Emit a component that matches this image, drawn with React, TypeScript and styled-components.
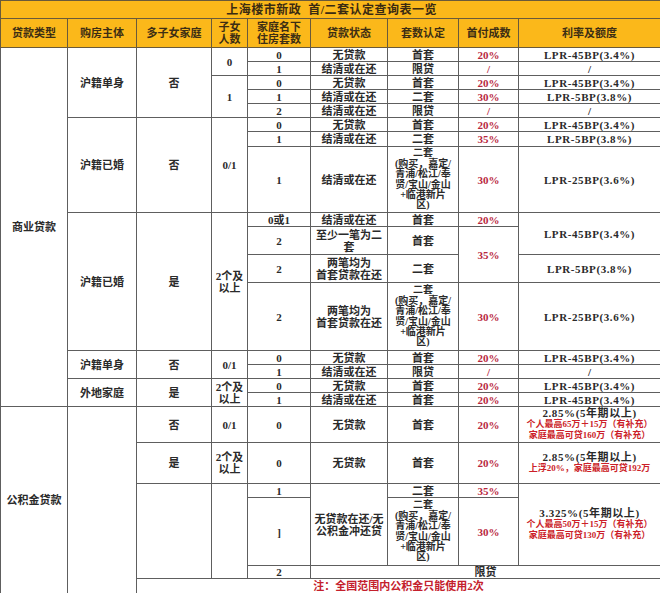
import styled, { createGlobalStyle } from "styled-components";
import React from "react";

const GlobalStyle = createGlobalStyle`
  html, body {
    margin: 0;
    padding: 0;
    background: #ffffff;
  }
  body {
    font-family: "Liberation Serif", "Noto Sans CJK SC", serif;
    color: #222;
  }
`;

const Sheet = styled.table`
  width: 660px;
  table-layout: fixed;
  border-collapse: collapse;
  font-size: 11px;
  line-height: 12px;
  font-weight: 700;
`;

const Row = styled.tr<{ $h: number }>`
  height: ${({ $h }) => $h}px;
`;

const TitleCell = styled.th`
  background: #fbb81a;
  border: 1px solid #6a5a3a;
  padding: 0 0 0 2px;
  font-size: 12px;
  color: #3a2b12;
  text-align: center;
  letter-spacing: 0.5px;
`;

const HeadCell = styled.th`
  background: #fbb81a;
  border: 1px solid #6a5a3a;
  padding: 0;
  font-size: 11px;
  line-height: 12px;
  color: #3d2e14;
  text-align: center;
  vertical-align: middle;
`;

const Cell = styled.td<{ $tone?: "red" | "note"; $small?: boolean }>`
  border: 1px solid #5e5e5e;
  padding: 0;
  text-align: center;
  vertical-align: middle;
  overflow: hidden;
  white-space: nowrap;
  font-size: ${({ $small }) => ($small ? "10px" : "11px")};
  line-height: ${({ $small }) => ($small ? "10.4px" : "12px")};
  color: ${({ $tone }) =>
    $tone === "red" ? "#b8283e" : $tone === "note" ? "#c4202c" : "#2a2a2a"};
`;

const Rate = styled.span`
  letter-spacing: 0.6px;
`;

const RateBlock = styled.div`
  display: flex;
  flex-direction: column;
  align-items: center;
  line-height: 11px;
`;

const RedLine = styled.span`
  font-size: 9px;
  line-height: 11px;
  color: #cc1f2a;
`;

const DISTRICT = (
  <>
    二套
    <br />
    (购买，嘉定/
    <br />
    青浦/松江/奉
    <br />
    贤/宝山/金山
    <br />
    +临港新片
    <br />
    区)
  </>
);

const cols = [67, 69, 75, 36, 63, 77, 71, 60, 142];

const Lpr: React.FC<{ text: string }> = ({ text }) => <Rate>{text}</Rate>;

export default function App() {
  return (
    <>
      <GlobalStyle />
      <Sheet>
        <colgroup>
          {cols.map((w, i) => (
            <col key={i} style={{ width: w }} />
          ))}
        </colgroup>
        <thead>
          <Row $h={18}>
            <TitleCell colSpan={9}>上海楼市新政&nbsp;&nbsp;首/二套认定查询表一览</TitleCell>
          </Row>
          <Row $h={29}>
            <HeadCell>贷款类型</HeadCell>
            <HeadCell>购房主体</HeadCell>
            <HeadCell>多子女家庭</HeadCell>
            <HeadCell>
              子女
              <br />
              人数
            </HeadCell>
            <HeadCell>
              家庭名下
              <br />
              住房套数
            </HeadCell>
            <HeadCell>贷款状态</HeadCell>
            <HeadCell>套数认定</HeadCell>
            <HeadCell>首付成数</HeadCell>
            <HeadCell>利率及额度</HeadCell>
          </Row>
        </thead>
        <tbody>
          {/* 商业贷款 */}
          <Row $h={14}>
            <Cell rowSpan={16}>商业贷款</Cell>
            <Cell rowSpan={5}>沪籍单身</Cell>
            <Cell rowSpan={5}>否</Cell>
            <Cell rowSpan={2}>0</Cell>
            <Cell>0</Cell>
            <Cell>无贷款</Cell>
            <Cell>首套</Cell>
            <Cell $tone="red">20%</Cell>
            <Cell><Lpr text="LPR-45BP(3.4%)" /></Cell>
          </Row>
          <Row $h={14}>
            <Cell>1</Cell>
            <Cell>结清或在还</Cell>
            <Cell>限贷</Cell>
            <Cell $tone="red">/</Cell>
            <Cell>/</Cell>
          </Row>
          <Row $h={14}>
            <Cell rowSpan={3}>1</Cell>
            <Cell>0</Cell>
            <Cell>无贷款</Cell>
            <Cell>首套</Cell>
            <Cell $tone="red">20%</Cell>
            <Cell><Lpr text="LPR-45BP(3.4%)" /></Cell>
          </Row>
          <Row $h={14}>
            <Cell>1</Cell>
            <Cell>结清或在还</Cell>
            <Cell>二套</Cell>
            <Cell $tone="red">30%</Cell>
            <Cell><Lpr text="LPR-5BP(3.8%)" /></Cell>
          </Row>
          <Row $h={14}>
            <Cell>2</Cell>
            <Cell>结清或在还</Cell>
            <Cell>限贷</Cell>
            <Cell $tone="red">/</Cell>
            <Cell>/</Cell>
          </Row>
          <Row $h={14}>
            <Cell rowSpan={3}>沪籍已婚</Cell>
            <Cell rowSpan={3}>否</Cell>
            <Cell rowSpan={3}>0/1</Cell>
            <Cell>0</Cell>
            <Cell>无贷款</Cell>
            <Cell>首套</Cell>
            <Cell $tone="red">20%</Cell>
            <Cell><Lpr text="LPR-45BP(3.4%)" /></Cell>
          </Row>
          <Row $h={15}>
            <Cell>1</Cell>
            <Cell>结清或在还</Cell>
            <Cell>二套</Cell>
            <Cell $tone="red">35%</Cell>
            <Cell><Lpr text="LPR-5BP(3.8%)" /></Cell>
          </Row>
          <Row $h={66}>
            <Cell>1</Cell>
            <Cell>结清或在还</Cell>
            <Cell $small>{DISTRICT}</Cell>
            <Cell $tone="red">30%</Cell>
            <Cell><Lpr text="LPR-25BP(3.6%)" /></Cell>
          </Row>
          <Row $h={14}>
            <Cell rowSpan={4}>沪籍已婚</Cell>
            <Cell rowSpan={4}>是</Cell>
            <Cell rowSpan={4}>
              2个及
              <br />
              以上
            </Cell>
            <Cell>0或1</Cell>
            <Cell>结清或在还</Cell>
            <Cell>首套</Cell>
            <Cell $tone="red">20%</Cell>
            <Cell rowSpan={2}><Lpr text="LPR-45BP(3.4%)" /></Cell>
          </Row>
          <Row $h={28}>
            <Cell>2</Cell>
            <Cell>
              至少一笔为二
              <br />
              套
            </Cell>
            <Cell>首套</Cell>
            <Cell rowSpan={2} $tone="red">35%</Cell>
          </Row>
          <Row $h={28}>
            <Cell>2</Cell>
            <Cell>
              两笔均为
              <br />
              首套贷款在还
            </Cell>
            <Cell>二套</Cell>
            <Cell><Lpr text="LPR-5BP(3.8%)" /></Cell>
          </Row>
          <Row $h={68}>
            <Cell>2</Cell>
            <Cell>
              两笔均为
              <br />
              首套贷款在还
            </Cell>
            <Cell $small>{DISTRICT}</Cell>
            <Cell $tone="red">30%</Cell>
            <Cell><Lpr text="LPR-25BP(3.6%)" /></Cell>
          </Row>
          <Row $h={14}>
            <Cell rowSpan={2}>沪籍单身</Cell>
            <Cell rowSpan={2}>否</Cell>
            <Cell rowSpan={2}>0/1</Cell>
            <Cell>0</Cell>
            <Cell>无贷款</Cell>
            <Cell>首套</Cell>
            <Cell $tone="red">20%</Cell>
            <Cell><Lpr text="LPR-45BP(3.4%)" /></Cell>
          </Row>
          <Row $h={14}>
            <Cell>1</Cell>
            <Cell>结清或在还</Cell>
            <Cell>限贷</Cell>
            <Cell $tone="red">/</Cell>
            <Cell>/</Cell>
          </Row>
          <Row $h={14}>
            <Cell rowSpan={2}>外地家庭</Cell>
            <Cell rowSpan={2}>是</Cell>
            <Cell rowSpan={2}>
              2个及
              <br />
              以上
            </Cell>
            <Cell>0</Cell>
            <Cell>无贷款</Cell>
            <Cell>首套</Cell>
            <Cell $tone="red">20%</Cell>
            <Cell><Lpr text="LPR-45BP(3.4%)" /></Cell>
          </Row>
          <Row $h={14}>
            <Cell>1</Cell>
            <Cell>结清或在还</Cell>
            <Cell>首套</Cell>
            <Cell $tone="red">20%</Cell>
            <Cell><Lpr text="LPR-45BP(3.4%)" /></Cell>
          </Row>

          {/* 公积金贷款 */}
          <Row $h={36}>
            <Cell rowSpan={6}>公积金贷款</Cell>
            <Cell rowSpan={6}></Cell>
            <Cell>否</Cell>
            <Cell>0/1</Cell>
            <Cell>0</Cell>
            <Cell>无贷款</Cell>
            <Cell>首套</Cell>
            <Cell $tone="red">20%</Cell>
            <Cell>
              <RateBlock>
                <Rate>2.85%(5年期以上)</Rate>
                <RedLine>个人最高65万＋15万（有补充）</RedLine>
                <RedLine>家庭最高可贷160万（有补充）</RedLine>
              </RateBlock>
            </Cell>
          </Row>
          <Row $h={41}>
            <Cell>是</Cell>
            <Cell>
              2个及
              <br />
              以上
            </Cell>
            <Cell>0</Cell>
            <Cell>无贷款</Cell>
            <Cell>首套</Cell>
            <Cell $tone="red">20%</Cell>
            <Cell>
              <RateBlock>
                <Rate>2.85%(5年期以上)</Rate>
                <RedLine>上浮20%，家庭最高可贷192万</RedLine>
              </RateBlock>
            </Cell>
          </Row>
          <Row $h={14}>
            <Cell rowSpan={3}></Cell>
            <Cell rowSpan={3}></Cell>
            <Cell>1</Cell>
            <Cell rowSpan={2}>
              无贷款在还/无
              <br />
              公积金冲还贷
            </Cell>
            <Cell>二套</Cell>
            <Cell $tone="red">35%</Cell>
            <Cell rowSpan={2}>
              <RateBlock>
                <Rate>3.325%(5年期以上)</Rate>
                <RedLine>个人最高50万＋15万（有补充）</RedLine>
                <RedLine>家庭最高可贷130万（有补充）</RedLine>
              </RateBlock>
            </Cell>
          </Row>
          <Row $h={68}>
            <Cell>]</Cell>
            <Cell $small>{DISTRICT}</Cell>
            <Cell $tone="red">30%</Cell>
          </Row>
          <Row $h={13}>
            <Cell>2</Cell>
            <Cell colSpan={4}>限贷</Cell>
          </Row>
          <Row $h={15}>
            <Cell colSpan={7} $tone="note">
              注：全国范围内公积金只能使用2次
            </Cell>
          </Row>
        </tbody>
      </Sheet>
    </>
  );
}
